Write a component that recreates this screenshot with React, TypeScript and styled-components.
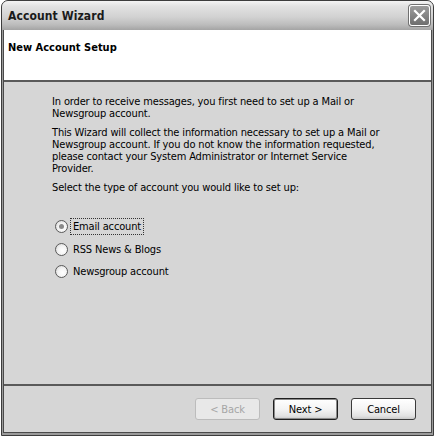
import React from "react";
import styled, { createGlobalStyle } from "styled-components";

const Global = createGlobalStyle`
  html, body { margin: 0; padding: 0; background: #ffffff; }
  body { font-family: "DejaVu Sans Condensed", "DejaVu Sans", sans-serif; font-size: 11px; color: #000; }
`;

const Window = styled.div`
  width: 434px;
  height: 437px;
  box-sizing: border-box;
  padding: 0 0 1px 1px;
  display: flex;
  flex-direction: column;
  background: #ffffff;
`;

const Frame = styled.div`
  flex: 1;
  display: flex;
  flex-direction: column;
  border: 1px solid #3c3c3c;
  border-radius: 7px 7px 0 0;
  background: #9a9a9a;
  overflow: hidden;
`;

const TitleBar = styled.div`
  height: 29px;
  flex: none;
  display: flex;
  align-items: center;
  justify-content: space-between;
  padding: 0 3px 0 6px;
  box-sizing: border-box;
  background: linear-gradient(
    to bottom,
    #f4f4f4 0%,
    #e2e2e2 18%,
    #d2d2d2 55%,
    #bcbcbc 82%,
    #a4a4a4 100%
  );
`;

const Title = styled.span`
  font-family: "DejaVu Sans Condensed", "DejaVu Sans", sans-serif;
  font-weight: bold;
  font-size: 12px;
  color: #1a1a1a;
  letter-spacing: 0.1px;
`;

const CloseButton = styled.div`
  width: 21px;
  height: 21px;
  box-sizing: border-box;
  border: 1px solid #ffffff;
  border-radius: 3px;
  background: linear-gradient(to bottom, #9c9c9c, #6e6e6e);
  box-shadow: 0 0 0 1px #707070;
  display: flex;
  align-items: center;
  justify-content: center;
`;

const Body = styled.div`
  flex: 1;
  display: flex;
  flex-direction: column;
  margin: 0 1px 2px 1px;
  border-left: 1px solid #4a4a4a;
  border-right: 1px solid #4a4a4a;
  border-bottom: 1px solid #4a4a4a;
  background: #d6d6d6;
`;

const Header = styled.div`
  height: 52px;
  flex: none;
  box-sizing: border-box;
  background: #ffffff;
  border-bottom: 2px solid #5a5a5a;
  padding: 11px 0 0 4px;
  font-weight: bold;
  font-size: 11px;
  letter-spacing: 0;
`;

const Page = styled.div`
  flex: 1;
  display: flex;
  flex-direction: column;
  padding: 14px 0 0 48px;
  border-bottom: 2px solid #5a5a5a;
  letter-spacing: -0.15px;
`;

const Para = styled.p`
  margin: 0 0 7px 0;
  line-height: 12px;
  width: 330px;
`;

const Options = styled.div`
  display: flex;
  flex-direction: column;
  gap: 9.5px;
  margin: 19px 0 0 3px;
`;

const Option = styled.label`
  display: flex;
  align-items: center;
  height: 13px;
  gap: 3px;
`;

const RadioCircle = styled.span<{ $checked?: boolean }>`
  width: 13px;
  height: 13px;
  box-sizing: border-box;
  border-radius: 50%;
  border: 1px solid #5a5a5a;
  background: radial-gradient(circle at 60% 60%, #ffffff 0%, #f4f4f4 45%, #cfcfcf 100%);
  display: flex;
  align-items: center;
  justify-content: center;
  flex: none;
  &::after {
    content: "";
    display: ${(p) => (p.$checked ? "block" : "none")};
    width: 5px;
    height: 5px;
    border-radius: 50%;
    background: #8a8a8a;
  }
`;

const OptionText = styled.span<{ $focused?: boolean }>`
  padding: 1px 2px;
  outline: ${(p) => (p.$focused ? "1px dotted #333" : "none")};
  outline-offset: 0;
  line-height: 13px;
`;

const ButtonRow = styled.div`
  height: 46px;
  flex: none;
  display: flex;
  justify-content: flex-end;
  align-items: flex-start;
  gap: 13px;
  padding: 12px 15px 0 0;
  box-sizing: border-box;
`;

const Button = styled.button<{ $default?: boolean }>`
  width: 65px;
  height: 22px;
  box-sizing: border-box;
  font-family: "DejaVu Sans Condensed", "DejaVu Sans", sans-serif;
  font-size: 11px;
  letter-spacing: -0.15px;
  color: #000;
  border-radius: 3px;
  border: 1px solid ${(p) => (p.$default ? "#1e1e1e" : "#3a3a3a")};
  box-shadow: ${(p) => (p.$default ? "inset 0 0 0 1px #8a8a8a" : "none")};
  background: linear-gradient(to bottom, #ffffff 0%, #f4f4f4 50%, #e2e2e2 85%, #c9c9c9 100%);
  padding: 0;
  &:disabled {
    color: #a6a6a6;
    border-color: #bcbcbc;
    background: #e8e8e8;
  }
`;

export default function App() {
  return (
    <>
      <Global />
      <Window>
        <Frame>
          <TitleBar>
            <Title>Account Wizard</Title>
            <CloseButton>
              <svg width="13" height="13" viewBox="0 0 13 13">
                <path d="M2 2 L11 11 M11 2 L2 11" stroke="#ffffff" strokeWidth="2.2" strokeLinecap="square" />
              </svg>
            </CloseButton>
          </TitleBar>
          <Body>
            <Header>New Account Setup</Header>
            <Page>
              <Para>
                In order to receive messages, you first need to set up a Mail or Newsgroup account.
              </Para>
              <Para>
                This Wizard will collect the information necessary to set up a Mail or Newsgroup
                account. If you do not know the information requested, please contact your System
                Administrator or Internet Service Provider.
              </Para>
              <Para>Select the type of account you would like to set up:</Para>
              <Options>
                <Option>
                  <RadioCircle $checked />
                  <OptionText $focused>Email account</OptionText>
                </Option>
                <Option>
                  <RadioCircle />
                  <OptionText>RSS News &amp; Blogs</OptionText>
                </Option>
                <Option>
                  <RadioCircle />
                  <OptionText>Newsgroup account</OptionText>
                </Option>
              </Options>
            </Page>
            <ButtonRow>
              <Button disabled>&lt; Back</Button>
              <Button $default>Next &gt;</Button>
              <Button>Cancel</Button>
            </ButtonRow>
          </Body>
        </Frame>
      </Window>
    </>
  );
}
